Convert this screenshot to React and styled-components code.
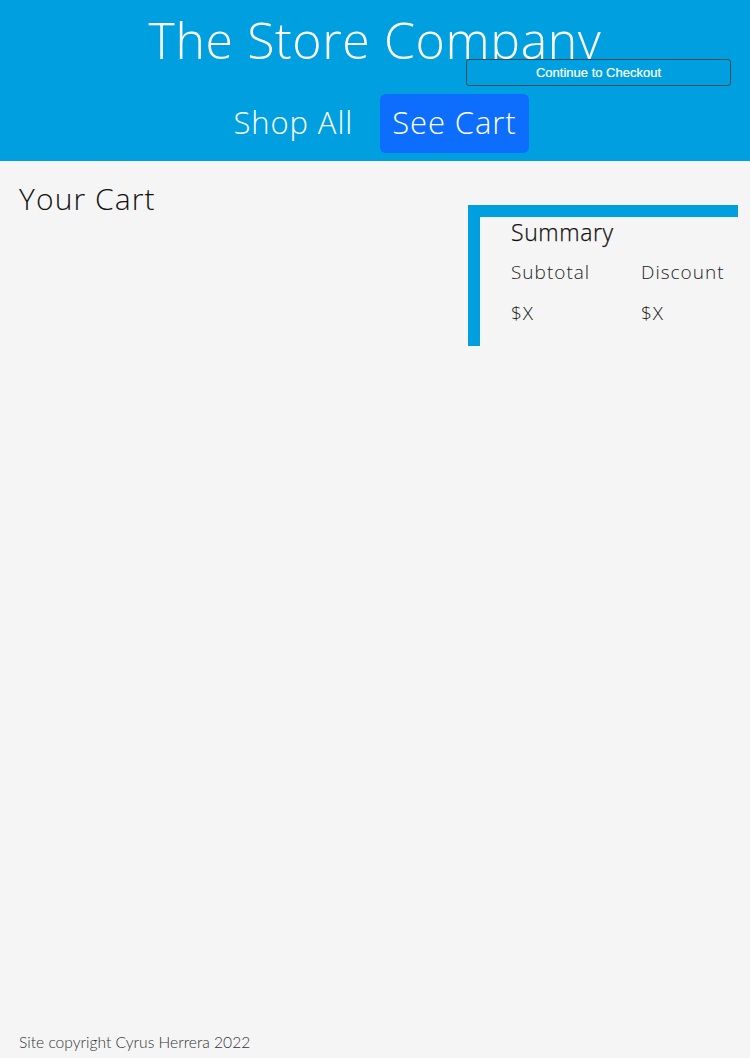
import React from "react";
import styled, { createGlobalStyle } from "styled-components";

const GlobalStyle = createGlobalStyle`
    html, body {
        margin: 0;
        padding: 0;
        background-color: #f5f5f5;
    }
    body {
        font-family: "Open Sans", "Noto Sans", sans-serif;
        font-weight: 300;
    }
    * {
        box-sizing: border-box;
    }
`;

const App = () => {
    return (
        <>
            <GlobalStyle />
            <Page>
                <Header>
                    <Title>The Store Company</Title>
                    <CheckoutButton>Continue to Checkout</CheckoutButton>
                    <Nav>
                        <NavLink>Shop All</NavLink>
                        <NavLink active>See Cart</NavLink>
                    </Nav>
                </Header>
                <Main>
                    <CartColumn>
                        <Heading>Your Cart</Heading>
                    </CartColumn>
                    <Summary>
                        <SummaryTitle>Summary</SummaryTitle>
                        <SummaryGrid>
                            <Label>Subtotal</Label>
                            <Label>Discount</Label>
                            <Label>$X</Label>
                            <Label>$X</Label>
                        </SummaryGrid>
                    </Summary>
                </Main>
                <Footer>Site copyright Cyrus Herrera 2022</Footer>
            </Page>
        </>
    );
};

export default App;

const Page = styled.div`
    display: flex;
    flex-direction: column;
    min-height: 1058px;
`;
const Header = styled.header`
    position: relative;
    background-color: #009fe0;
    height: 161px;
    display: flex;
    flex-direction: column;
    align-items: center;
    color: #fff;
`;
const Title = styled.h1`
    margin: 0;
    height: 94px;
    padding-top: 10px;
    font-size: 50px;
    font-weight: 300;
    line-height: 1.2;
    letter-spacing: 0.6px;
`;
const CheckoutButton = styled.button`
    position: absolute;
    top: 59px;
    left: 466px;
    width: 265px;
    height: 27px;
    background-color: #009fe0;
    border: 1px solid #3a4a55;
    border-radius: 3px;
    color: #fff;
    font-family: "Liberation Sans", Arial, sans-serif;
    font-size: 13px;
    font-weight: 500;
    -webkit-text-stroke: 0.2px #fff;
    cursor: pointer;
`;
const Nav = styled.nav`
    display: flex;
    gap: 15px;
    align-items: center;
`;
const NavLink = styled.a`
    display: block;
    padding: 0 12px;
    height: 59px;
    line-height: 57px;
    font-size: 31px;
    font-weight: 300;
    letter-spacing: 0.9px;
    border-radius: 6px;
    color: #fff;
    background-color: ${(p) => (p.active ? "#0d6efd" : "transparent")};
`;
const Main = styled.main`
    display: flex;
    justify-content: space-between;
    padding: 0 12px 0 19px;
    flex: 1;
`;
const CartColumn = styled.div`
    padding-top: 17px;
`;
const Heading = styled.h2`
    margin: 0;
    font-size: 30px;
    font-weight: 300;
    letter-spacing: 1.1px;
    color: #111;
`;
const Summary = styled.section`
    margin-top: 44px;
    width: 270px;
    height: 141px;
    border-left: 12px solid #009fe0;
    border-top: 12px solid #009fe0;
    padding: 0 0 0 31px;
    color: #111;
`;
const SummaryTitle = styled.h3`
    margin: 0;
    font-size: 23px;
    font-weight: 300;
    letter-spacing: 0.6px;
    line-height: 30px;
    -webkit-text-stroke: 0.25px #111;
`;
const SummaryGrid = styled.div`
    display: grid;
    grid-template-columns: 130px 1fr;
    row-gap: 14px;
    margin-top: 12px;
`;
const Label = styled.span`
    font-size: 19px;
    font-weight: 300;
    letter-spacing: 1px;
    line-height: 27px;
    color: #222;
`;
const Footer = styled.footer`
    padding: 0 19px 4px;
    font-family: Lato, "Open Sans", sans-serif;
    font-weight: 300;
    font-size: 15.6px;
    line-height: 24px;
    color: #333;
`;
